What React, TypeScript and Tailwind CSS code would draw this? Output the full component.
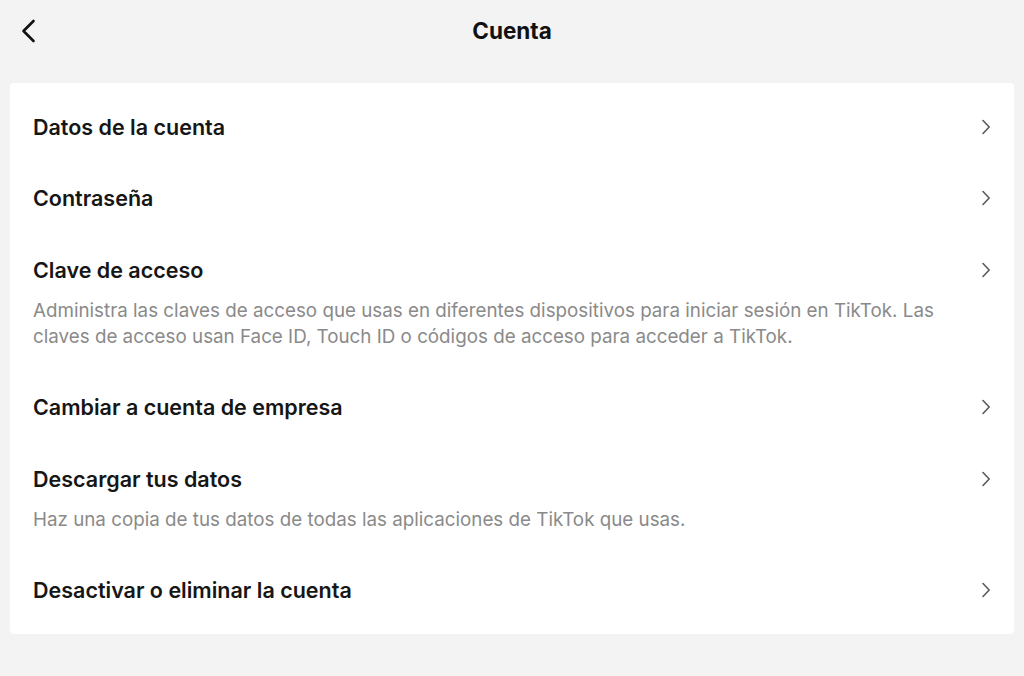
interface AccountItem {
  title: string
  description?: string
}

const items: AccountItem[] = [
  { title: "Datos de la cuenta" },
  { title: "Contraseña" },
  {
    title: "Clave de acceso",
    description:
      "Administra las claves de acceso que usas en diferentes dispositivos para iniciar sesión en TikTok. Las claves de acceso usan Face ID, Touch ID o códigos de acceso para acceder a TikTok.",
  },
  { title: "Cambiar a cuenta de empresa" },
  {
    title: "Descargar tus datos",
    description: "Haz una copia de tus datos de todas las aplicaciones de TikTok que usas.",
  },
  { title: "Desactivar o eliminar la cuenta" },
]

function RowChevron() {
  return (
    <svg width="10" height="16" viewBox="0 0 10 16" fill="none" className="text-[#5a5a5a]">
      <path d="M2 1.5 L8.2 8 L2 14.5" stroke="currentColor" strokeWidth="1.6" strokeLinecap="round" strokeLinejoin="round" />
    </svg>
  )
}

function BackChevron() {
  return (
    <svg width="18" height="24" viewBox="0 0 18 24" fill="none" className="text-[#111]">
      <path d="M13.5 2 L3.5 12 L13.5 22" stroke="currentColor" strokeWidth="2.6" strokeLinecap="round" strokeLinejoin="round" />
    </svg>
  )
}

function SettingsRow({ item }: { item: AccountItem }) {
  return (
    <button className="w-full flex items-start text-left pl-[23px] pr-[23px] py-[21.75px]">
      <div className="flex-1 min-w-0">
        <div className="text-[21.5px] leading-[28px] font-semibold text-[#161616]">
          {item.title}
        </div>
        {item.description && (
          <p className="mt-[14px] max-w-[915px] text-[18.8px] leading-[26px] text-[#8a8a8a]">
            {item.description}
          </p>
        )}
      </div>
      <div className="h-[28px] flex items-center">
        <RowChevron />
      </div>
    </button>
  )
}

export default function App() {
  return (
    <div
      className="min-h-[676px] bg-[#f3f3f3] pb-10"
      style={{ fontFamily: "Inter, 'Noto Sans', sans-serif" }}
    >
      {/* Header */}
      <header className="relative h-[62px] flex items-center justify-center">
        <button className="absolute left-[20px] top-[19px]" aria-label="Atrás">
          <BackChevron />
        </button>
        <h1 className="text-[22.5px] font-bold text-[#111]">Cuenta</h1>
      </header>

      {/* Card */}
      <div className="mx-[10px] mt-[21px] bg-white rounded-[4px] py-2">
        {items.map((item) => (
          <SettingsRow key={item.title} item={item} />
        ))}
      </div>
    </div>
  )
}
